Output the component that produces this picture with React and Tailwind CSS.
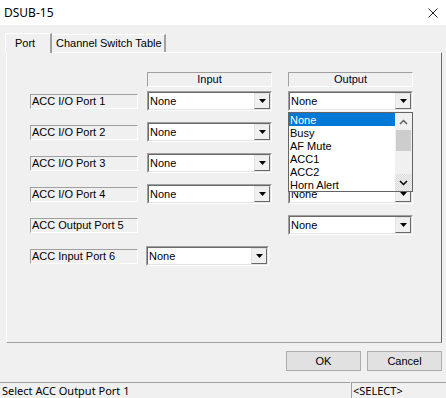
import { useState } from 'react'

const classic = { fontFamily: '"Liberation Sans", Arial, sans-serif' }
const segoe = { fontFamily: '"Noto Sans", "Open Sans", sans-serif' }

const options = ['None', 'Busy', 'AF Mute', 'ACC1', 'ACC2', 'Horn Alert']

function Arrow() {
  return (
    <svg width="7" height="4" viewBox="0 0 7 4" className="block">
      <path d="M0 0h7L3.5 4z" fill="#000" />
    </svg>
  )
}

function Combo({ value = 'None', className = 'w-[125px]' }) {
  return (
    <div className={`h-[20px] bg-white border border-t-[#a0a0a0] border-l-[#a0a0a0] border-r-white border-b-white ${className}`}>
      <div className="h-full flex items-center border border-t-[#696969] border-l-[#696969] border-r-[#e3e3e3] border-b-[#e3e3e3]">
        <span className="flex-1 pl-[1px] text-[11px] leading-none text-black">{value}</span>
        <div className="w-[16px] h-[16px] bg-[#f0f0f0] border border-t-[#e3e3e3] border-l-[#e3e3e3] border-r-[#696969] border-b-[#696969] flex items-center justify-center">
          <Arrow />
        </div>
      </div>
    </div>
  )
}

function Label({ children }) {
  return (
    <div className="w-[108px] h-[15px] border border-t-[#a0a0a0] border-l-[#a0a0a0] border-r-white border-b-white flex items-center pl-[1px] text-[11px] leading-none text-black">
      {children}
    </div>
  )
}

function Header({ children }) {
  return (
    <div className="w-[125px] h-[15px] border border-t-[#a0a0a0] border-l-[#a0a0a0] border-r-white border-b-white flex items-center justify-center text-[11px] leading-none text-[#000030]">
      {children}
    </div>
  )
}

function DropList() {
  const [sel] = useState(0)
  return (
    <div className="absolute left-0 top-[21px] w-[125px] h-[80px] bg-white border border-[#646464] flex z-10">
      <div className="flex-1 flex flex-col">
        {options.map((o, i) => (
          <div key={o}
            className={`h-[13px] flex items-center pl-[1px] text-[11px] leading-[12px] ${i === sel ? 'bg-[#0078d7] text-white' : 'text-black'}`}>
            {o}
          </div>
        ))}
      </div>
      <div className="w-[17px] bg-[#f0f0f0] flex flex-col">
        <div className="h-[17px] flex items-center justify-center">
          <svg width="9" height="6" viewBox="0 0 9 6"><path d="M1 5L4.5 1.5L8 5" stroke="#606060" strokeWidth="1.5" fill="none" /></svg>
        </div>
        <div className="mx-[1px] h-[21px] bg-[#cdcdcd]" />
        <div className="flex-1" />
        <div className="h-[17px] flex items-center justify-center bg-[repeating-conic-gradient(#dadada_0_25%,#f0f0f0_0_50%)] bg-[length:2px_2px]">
          <svg width="9" height="6" viewBox="0 0 9 6"><path d="M1 1L4.5 4.5L8 1" stroke="#000" strokeWidth="1.5" fill="none" /></svg>
        </div>
      </div>
    </div>
  )
}

function Row({ label, input = true, output = true, open = false, last = false }) {
  return (
    <div className="flex items-center h-[20px]">
      <div className="ml-[23px] w-[108px] flex items-center">
        <Label>{label}</Label>
      </div>
      <div className={last ? 'ml-[8px] w-[141px]' : 'ml-[9px] w-[141px]'}>
        {input && <Combo className={last ? 'w-[123px]' : 'w-[125px]'} />}
      </div>
      <div className="relative w-[125px]">
        {output && <Combo />}
        {open && <DropList />}
      </div>
    </div>
  )
}

export default function App() {
  return (
    <div className="w-[446px] h-[398px] bg-[#f0f0f0] flex flex-col overflow-hidden select-none">
      <div className="h-[25px] bg-white flex items-center justify-between pl-[4px] pr-[8px]" style={segoe}>
        <span className="text-[12px] text-black">DSUB-15</span>
        <svg width="10" height="10" viewBox="0 0 10 10">
          <path d="M0.5 0.5L9.5 9.5M9.5 0.5L0.5 9.5" stroke="#222" strokeWidth="1" />
        </svg>
      </div>

      <div className="flex items-end pl-[5px] h-[27px]" style={classic}>
        <div className="relative z-10 -mb-[1px] w-[47px] h-[20px] bg-[#f0f0f0] border-t border-l border-white border-r-2 border-r-[#a0a0a0] flex items-center pl-[9px] text-[11px] text-black leading-none">
          Port
        </div>
        <div className="w-[114px] h-[18px] bg-[#f0f0f0] border-t border-white border-r-2 border-r-[#a0a0a0] flex items-center pl-[4px] text-[11px] text-black leading-none">
          Channel Switch Table
        </div>
      </div>

      <div className="ml-[6px] w-[436px] h-[291px] border-t border-l border-white border-r border-b border-r-[#696969] border-b-[#a0a0a0] pt-[19px] flex flex-col" style={classic}>
        <div className="flex">
          <div className="ml-[140px]"><Header>Input</Header></div>
          <div className="ml-[16px]"><Header>Output</Header></div>
        </div>
        <div className="mt-[4px] flex flex-col gap-[11px]">
          <Row label="ACC I/O Port 1" open />
          <Row label="ACC I/O Port 2" />
          <Row label="ACC I/O Port 3" />
          <Row label="ACC I/O Port 4" />
          <Row label="ACC Output Port 5" input={false} />
          <Row label="ACC Input Port 6" output={false} last />
        </div>
      </div>

      <div className="mt-[8px] h-[20px] flex justify-end gap-[6px] pr-[4px]" style={classic}>
        {['OK', 'Cancel'].map(b => (
          <button key={b}
            className="w-[75px] h-[20px] bg-[#e1e1e1] border border-[#adadad] text-[11px] text-black leading-none">
            {b}
          </button>
        ))}
      </div>

      <div className="mt-[11px] h-[16px] flex" style={segoe}>
        <div className="w-[350px] border-t border-[#a0a0a0] flex items-center pl-[2px] text-[11px] text-black leading-none">
          Select ACC Output Port 1
        </div>
        <div className="ml-[1px] flex-1 border-t border-l border-[#a0a0a0] flex items-center pl-[1px] text-[11px] text-black leading-none">
          &lt;SELECT&gt;
        </div>
      </div>
    </div>
  )
}
